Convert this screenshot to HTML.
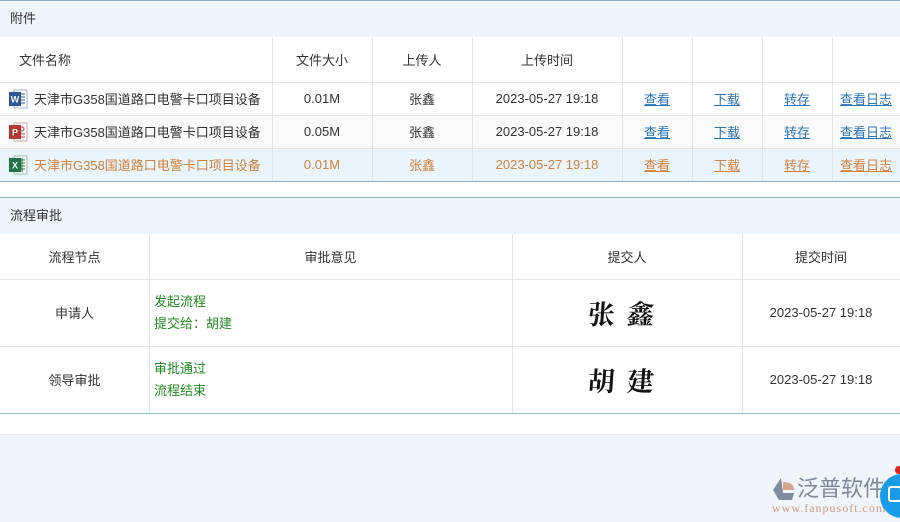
<!DOCTYPE html>
<html><head><meta charset="utf-8"><style>
*{margin:0;padding:0;box-sizing:border-box}
body{width:900px;height:522px;overflow:hidden;background:#f0f5fc;font-family:"Liberation Sans","Noto Sans CJK SC",sans-serif;font-size:13px;color:#333;position:relative}
.a{position:absolute}
.sec{position:absolute;left:0;width:900px;height:37px;background:#eef4fb;line-height:37px;padding-left:10px;color:#333}
.white{position:absolute;left:0;width:900px;background:#fff}
.cell{position:absolute;display:flex;align-items:center;justify-content:center;border-right:1px solid #e4e4e4;border-bottom:1px solid #e4e4e4;white-space:nowrap}
.lk{color:#2a74b8;text-decoration:underline}
.o{color:#d4813a}
.o .lk{color:#d4813a}
.g{color:#1f8a1f;line-height:22px}
.sig{font-family:"Noto Serif CJK SC",serif;font-weight:700;font-size:27px;color:#111;letter-spacing:12px;transform:skewX(-4deg)}
.ic{width:20px;height:22px;flex-shrink:0;margin-right:6px}
.fn{font-size:13px;justify-content:flex-start;padding-left:8px}
</style></head><body>
<div class="white" style="top:0;height:434px"></div>
<div class="a" style="left:0;top:0;width:900px;height:1px;background:#8fb0c8"></div>
<div class="sec" style="top:1px;height:36px;line-height:36px">附件</div>

<div class="cell" style="left:0;top:37px;width:273px;height:46px;justify-content:flex-start;padding-left:19px">文件名称</div>
<div class="cell" style="left:272px;top:37px;width:101px;height:46px">文件大小</div>
<div class="cell" style="left:372px;top:37px;width:101px;height:46px">上传人</div>
<div class="cell" style="left:472px;top:37px;width:151px;height:46px">上传时间</div>
<div class="cell" style="left:622px;top:37px;width:71px;height:46px"></div>
<div class="cell" style="left:692px;top:37px;width:71px;height:46px"></div>
<div class="cell" style="left:762px;top:37px;width:71px;height:46px"></div>
<div class="cell" style="left:832px;top:37px;width:68px;height:46px;border-right:none"></div>

<div class="a" style="left:0;top:115px;width:900px;height:33px;background:#fafafa"></div>
<div class="a" style="left:0;top:148px;width:900px;height:33px;background:#eaf4fd"></div>

<div class="cell fn" style="left:0;top:82px;width:273px;height:34px"><svg class="ic" viewBox="0 0 20 22"><rect x="6" y="2" width="13" height="18" fill="#fff" stroke="#9bb0d0"/><path d="M10 6h7M10 9h7M10 12h7M10 15h7" stroke="#2b579a"/><rect x="1" y="4" width="12" height="14" fill="#2b579a"/><text x="7" y="14.5" font-size="9" fill="#fff" text-anchor="middle" font-weight="bold">W</text></svg>天津市G358国道路口电警卡口项目设备</div>
<div class="cell" style="left:272px;top:82px;width:101px;height:34px">0.01M</div>
<div class="cell" style="left:372px;top:82px;width:101px;height:34px">张鑫</div>
<div class="cell" style="left:472px;top:82px;width:151px;height:34px">2023-05-27 19:18</div>
<div class="cell" style="left:622px;top:82px;width:71px;height:34px"><span class="lk">查看</span></div>
<div class="cell" style="left:692px;top:82px;width:71px;height:34px"><span class="lk">下载</span></div>
<div class="cell" style="left:762px;top:82px;width:71px;height:34px"><span class="lk">转存</span></div>
<div class="cell" style="left:832px;top:82px;width:68px;height:34px;border-right:none"><span class="lk">查看日志</span></div>

<div class="cell fn" style="left:0;top:115px;width:273px;height:34px"><svg class="ic" viewBox="0 0 20 22"><rect x="6" y="2" width="13" height="18" fill="#fff" stroke="#d0a0a0"/><circle cx="14" cy="8" r="2" fill="none" stroke="#c43e3e"/><path d="M10 13h7M10 16h7" stroke="#c43e3e"/><rect x="1" y="4" width="12" height="14" fill="#b7372f"/><text x="7" y="14.5" font-size="9" fill="#fff" text-anchor="middle" font-weight="bold">P</text></svg>天津市G358国道路口电警卡口项目设备</div>
<div class="cell" style="left:272px;top:115px;width:101px;height:34px">0.05M</div>
<div class="cell" style="left:372px;top:115px;width:101px;height:34px">张鑫</div>
<div class="cell" style="left:472px;top:115px;width:151px;height:34px">2023-05-27 19:18</div>
<div class="cell" style="left:622px;top:115px;width:71px;height:34px"><span class="lk">查看</span></div>
<div class="cell" style="left:692px;top:115px;width:71px;height:34px"><span class="lk">下载</span></div>
<div class="cell" style="left:762px;top:115px;width:71px;height:34px"><span class="lk">转存</span></div>
<div class="cell" style="left:832px;top:115px;width:68px;height:34px;border-right:none"><span class="lk">查看日志</span></div>

<div class="o">
<div class="cell fn" style="left:0;top:148px;width:273px;height:34px;border-bottom:1px solid #8fb0c8"><svg class="ic" viewBox="0 0 20 22"><rect x="6" y="2" width="13" height="18" fill="#fff" stroke="#90c0a0"/><path d="M10 6h7M10 9h7M10 12h7M10 15h7M14 4v14" stroke="#217346"/><rect x="1" y="4" width="12" height="14" fill="#217346"/><text x="7" y="14.5" font-size="9" fill="#fff" text-anchor="middle" font-weight="bold">X</text></svg>天津市G358国道路口电警卡口项目设备</div>
<div class="cell" style="left:272px;top:148px;width:101px;height:34px;border-bottom:1px solid #8fb0c8">0.01M</div>
<div class="cell" style="left:372px;top:148px;width:101px;height:34px;border-bottom:1px solid #8fb0c8">张鑫</div>
<div class="cell" style="left:472px;top:148px;width:151px;height:34px;border-bottom:1px solid #8fb0c8">2023-05-27 19:18</div>
<div class="cell" style="left:622px;top:148px;width:71px;height:34px;border-bottom:1px solid #8fb0c8"><span class="lk">查看</span></div>
<div class="cell" style="left:692px;top:148px;width:71px;height:34px;border-bottom:1px solid #8fb0c8"><span class="lk">下载</span></div>
<div class="cell" style="left:762px;top:148px;width:71px;height:34px;border-bottom:1px solid #8fb0c8"><span class="lk">转存</span></div>
<div class="cell" style="left:832px;top:148px;width:68px;height:34px;border-right:none;border-bottom:1px solid #8fb0c8"><span class="lk">查看日志</span></div>
</div>

<div class="a" style="left:0;top:197px;width:900px;height:1px;background:#8fb0c8"></div>
<div class="sec" style="top:198px;height:36px;line-height:36px">流程审批</div>
<div class="cell" style="left:0;top:234px;width:150px;height:46px">流程节点</div>
<div class="cell" style="left:149px;top:234px;width:364px;height:46px">审批意见</div>
<div class="cell" style="left:512px;top:234px;width:231px;height:46px">提交人</div>
<div class="cell" style="left:742px;top:234px;width:158px;height:46px;border-right:none">提交时间</div>

<div class="cell" style="left:0;top:279px;width:150px;height:68px">申请人</div>
<div class="cell" style="left:149px;top:279px;width:364px;height:68px;justify-content:flex-start;padding-left:5px"><div class="g">发起流程<br>提交给：胡建</div></div>
<div class="cell" style="left:512px;top:279px;width:231px;height:68px"><span class="sig">张鑫</span></div>
<div class="cell" style="left:742px;top:279px;width:158px;height:68px;border-right:none">2023-05-27 19:18</div>

<div class="cell" style="left:0;top:346px;width:150px;height:68px;border-bottom:1px solid #8fbcc8">领导审批</div>
<div class="cell" style="left:149px;top:346px;width:364px;height:68px;justify-content:flex-start;padding-left:5px;border-bottom:1px solid #8fbcc8"><div class="g">审批通过<br>流程结束</div></div>
<div class="cell" style="left:512px;top:346px;width:231px;height:68px;border-bottom:1px solid #8fbcc8"><span class="sig">胡建</span></div>
<div class="cell" style="left:742px;top:346px;width:158px;height:68px;border-right:none;border-bottom:1px solid #8fbcc8">2023-05-27 19:18</div>

<div class="a" style="left:0;top:434px;width:900px;height:1px;background:#e2e8f0"></div>

<svg class="a" style="left:770px;top:477px" width="26" height="24" viewBox="0 0 26 24"><path d="M11 1 L3 13 L9 23 L13 15 Z" fill="#7f8aa0"/><path d="M13 5 Q24 5 24 13 L13 13 Z" fill="#d9a58a"/><path d="M12 16 L24 16 L22 23 L9 23 Z" fill="#7f8aa0"/></svg>
<div class="a" style="left:797px;top:476px;font-size:22px;line-height:26px;color:#7d879a;letter-spacing:0px">泛普软件</div>
<div class="a" style="left:772px;top:501px;font-family:'Liberation Serif',serif;font-size:12px;color:#d29a7e;letter-spacing:1px">www.fanpusoft.com</div>
<div class="a" style="left:880px;top:474px;width:44px;height:44px;border-radius:50%;background:#1a9be8"></div>
<div class="a" style="left:888px;top:486px;width:14px;height:16px;border:2px solid #fff;border-radius:3px"></div>
<div class="a" style="left:895px;top:466px;width:8px;height:8px;border-radius:50%;background:#e02020"></div>
</body></html>
